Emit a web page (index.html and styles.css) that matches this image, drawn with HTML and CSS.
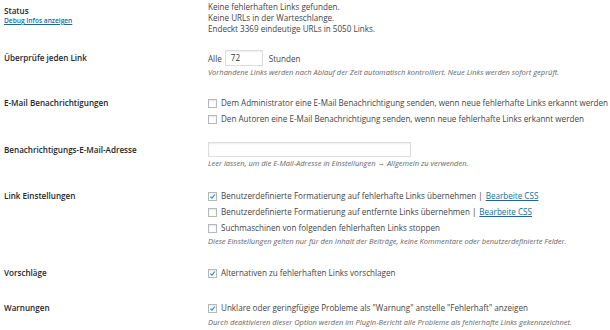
FILE: index.html
```html
<!DOCTYPE html>
<html lang="de">
<head>
<meta charset="utf-8">
<link rel="stylesheet" href="styles.css">
</head>
<body>
<div class="settings">
  <div class="row row-status">
    <div class="label">Status<a class="debug" href="#">Debug Infos anzeigen</a></div>
    <div class="field">
      <div class="line">Keine fehlerhaften Links gefunden.</div>
      <div class="line">Keine URLs in der Warteschlange.</div>
      <div class="line">Endeckt 3369 eindeutige URLs in 5050 Links.</div>
    </div>
  </div>

  <div class="row row-check">
    <div class="label lbl-input">Überprüfe jeden Link</div>
    <div class="field">
      <div class="inline">Alle <span class="input small">72</span> Stunden</div>
      <div class="desc">Vorhandene Links werden nach Ablauf der Zeit automatisch kontrolliert. Neue Links werden sofort geprüft.</div>
    </div>
  </div>

  <div class="row row-mail">
    <div class="label lbl-cb">E-Mail Benachrichtigungen</div>
    <div class="field">
      <div class="cb"><span class="box"></span>Dem Administrator eine E-Mail Benachrichtigung senden, wenn neue fehlerhafte Links erkannt werden</div>
      <div class="cb"><span class="box"></span>Den Autoren eine E-Mail Benachrichtigung senden, wenn neue fehlerhafte Links erkannt werden</div>
    </div>
  </div>

  <div class="row row-addr">
    <div class="label lbl-input">Benachrichtigungs-E-Mail-Adresse</div>
    <div class="field">
      <div class="inline"><span class="input wide"></span></div>
      <div class="desc">Leer lassen, um die E-Mail-Adresse in Einstellungen → Allgemein zu verwenden.</div>
    </div>
  </div>

  <div class="row row-link">
    <div class="label lbl-cb">Link Einstellungen</div>
    <div class="field">
      <div class="cb"><span class="box checked"><svg viewBox="0 0 10 10"><path d="M2 5.2 L4.2 7.4 L8.3 2.2"/></svg></span>Benutzerdefinierte Formatierung auf fehlerhafte Links übernehmen <span class="sep">|</span> <a href="#">Bearbeite CSS</a></div>
      <div class="cb"><span class="box"></span>Benutzerdefinierte Formatierung auf entfernte Links übernehmen <span class="sep">|</span> <a href="#">Bearbeite CSS</a></div>
      <div class="cb"><span class="box"></span>Suchmaschinen von folgenden fehlerhaften Links stoppen</div>
      <div class="desc">Diese Einstellungen gelten nur für den Inhalt der Beiträge, keine Kommentare oder benutzerdefinierte Felder.</div>
    </div>
  </div>

  <div class="row row-sugg">
    <div class="label lbl-cb">Vorschläge</div>
    <div class="field">
      <div class="cb"><span class="box checked"><svg viewBox="0 0 10 10"><path d="M2 5.2 L4.2 7.4 L8.3 2.2"/></svg></span>Alternativen zu fehlerhaften Links vorschlagen</div>
    </div>
  </div>

  <div class="row row-warn">
    <div class="label lbl-cb">Warnungen</div>
    <div class="field">
      <div class="cb"><span class="box checked"><svg viewBox="0 0 10 10"><path d="M2 5.2 L4.2 7.4 L8.3 2.2"/></svg></span>Unklare oder geringfügige Probleme als "Warnung" anstelle "Fehlerhaft" anzeigen</div>
      <div class="desc">Durch deaktivieren dieser Option werden im Plugin-Bericht alle Probleme als fehlerhafte Links gekennzeichnet.</div>
    </div>
  </div>
</div>
</body>
</html>
```

FILE: styles.css
```css
html, body {
  margin: 0;
  padding: 0;
  background: #ffffff;
}
body {
  font-family: "Open Sans", "Noto Sans", sans-serif;
  font-size: 8.1px;
  color: #444444;
  width: 610px;
  height: 330px;
  overflow: hidden;
}
.settings {
  padding: 1px 0 0 4px;
  display: flex;
  flex-direction: column;
}
.row {
  display: grid;
  grid-template-columns: 204px 1fr;
}
.label {
  font-weight: 600;
  color: #23282d;
  line-height: 11px;
}
.row-status .label { padding-top: 4px; }
.debug {
  display: block;
  font-size: 6.6px;
  line-height: 9px;
  color: #0073aa;
  font-weight: 600;
}
.field { white-space: nowrap; }
.line { line-height: 11px; }
.lbl-input { line-height: 16px; }
.lbl-cb { line-height: 16px; }
.inline {
  display: flex;
  align-items: center;
  height: 16px;
  gap: 3px;
}
.input {
  display: inline-block;
  box-sizing: border-box;
  border: 1px solid #dddddd;
  background: #fff;
  box-shadow: inset 0 1px 2px rgba(0,0,0,0.07);
  height: 16px;
  line-height: 14px;
  padding: 0 5px;
  color: #32373c;
}
.input.small { width: 38px; margin-right: 3px; }
.row-addr .inline { height: 15px; }
.input.wide { width: 203px; height: 15px; }
.desc {
  font-style: italic;
  font-size: 7.5px;
  line-height: 11px;
  color: #666666;
  margin-top: 1px;
}
.row-link .desc { margin-top: 0; }
.cb {
  display: flex;
  align-items: center;
  height: 16px;
  line-height: 16px;
}
.box {
  box-sizing: border-box;
  width: 9px;
  height: 9px;
  border: 1px solid #b4b9be;
  background: #fff;
  box-shadow: inset 0 1px 2px rgba(0,0,0,0.1);
  margin-right: 4px;
  flex: none;
  position: relative;
}
.box svg {
  position: absolute;
  left: 0;
  top: 0;
  width: 7px;
  height: 7px;
}
.box svg path {
  fill: none;
  stroke: #1e8cbe;
  stroke-width: 1.5;
}
.sep { color: #444; margin: 0 2px; }
.cb a { color: #0073aa; margin-left: 1px; }
.row-check { margin-top: 16px; }
.row-mail { margin-top: 17px; }
.row-addr { margin-top: 15px; }
.row-link { margin-top: 19px; }
.row-sugg { margin-top: 18px; }
.row-warn { margin-top: 19px; }
```
